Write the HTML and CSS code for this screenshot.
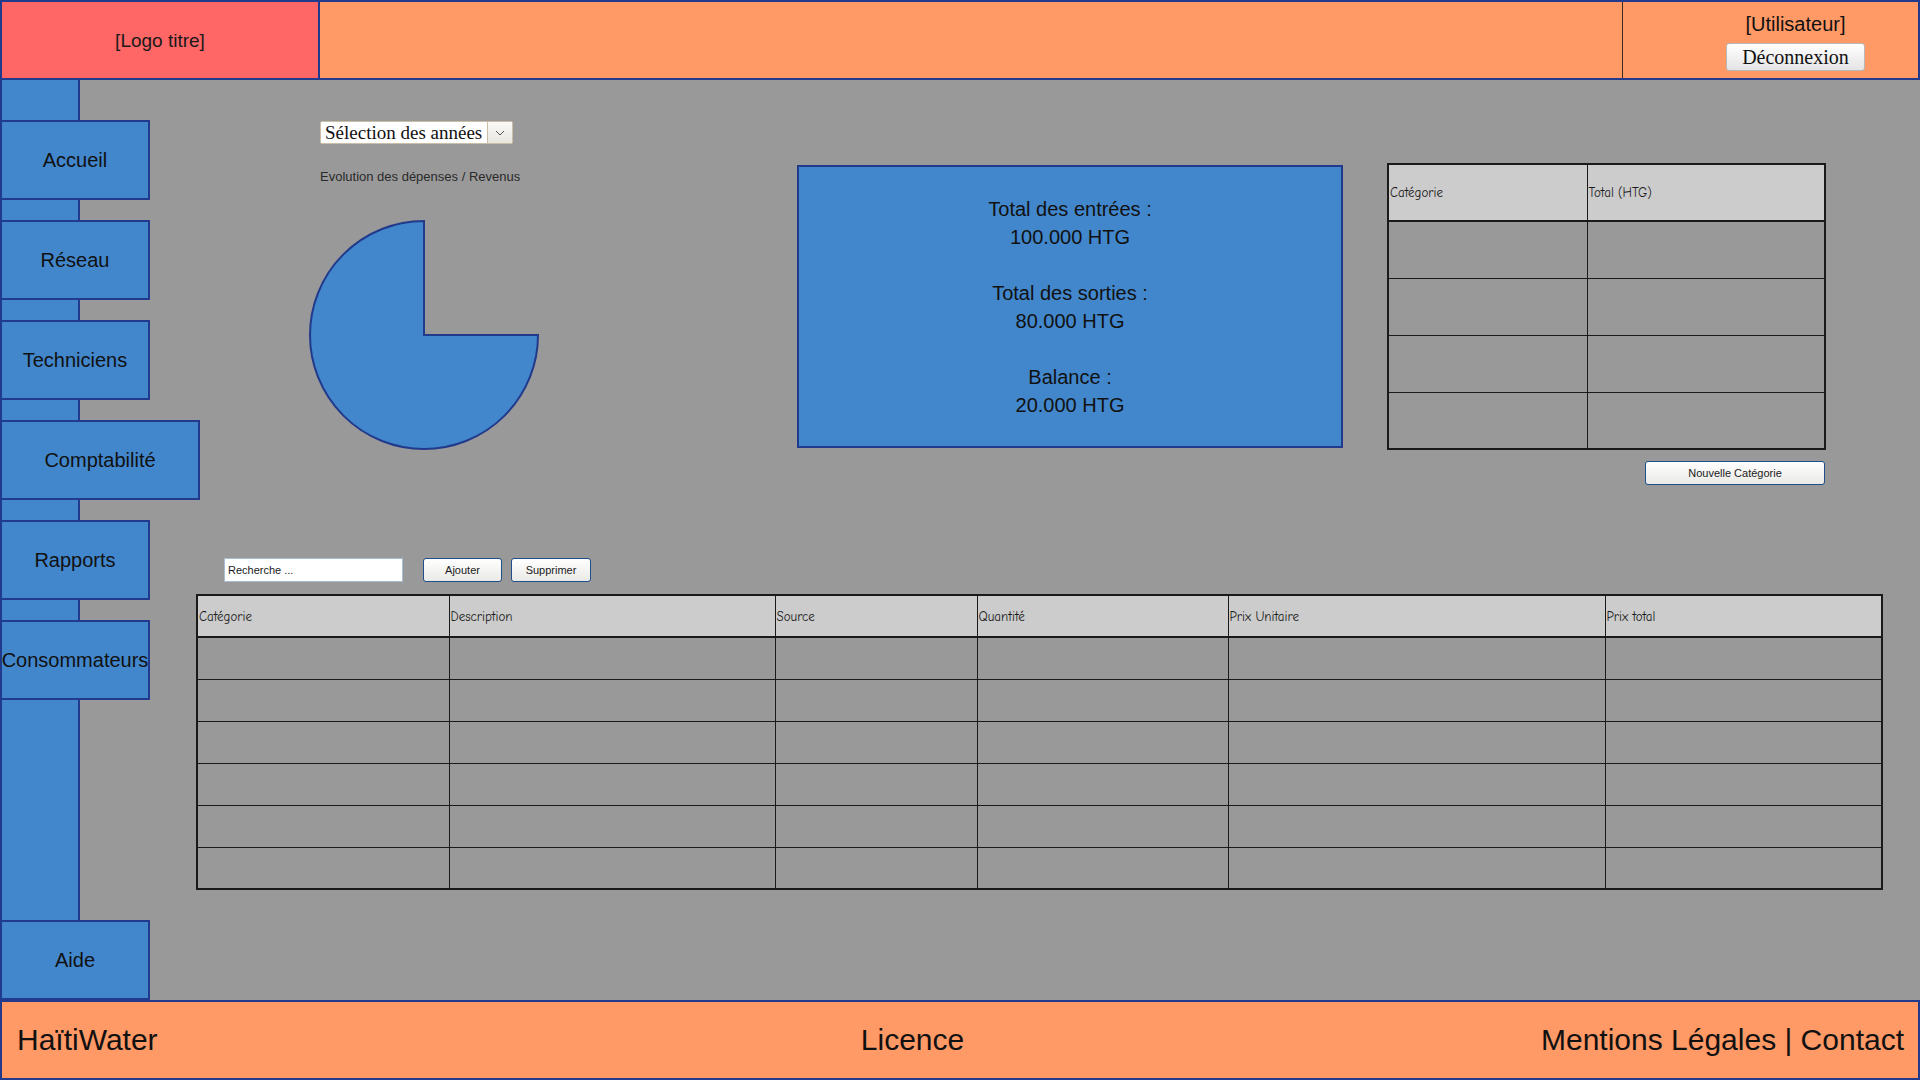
FILE: index.html
```html
<!DOCTYPE html>
<html lang="fr">
<head>
<meta charset="utf-8">
<title>HaïtiWater - Comptabilité</title>
<link rel="stylesheet" href="styles.css">
</head>
<body>
<div class="app">
  <header class="topbar">
    <div class="logo">[Logo titre]</div>
    <div class="topbar-fill"></div>
    <div class="user">
      <div class="user-name">[Utilisateur]</div>
      <button class="btn-logout">Déconnexion</button>
    </div>
  </header>

  <div class="middle">
    <nav class="sidebar">
      <div class="nav-btn">Accueil</div>
      <div class="nav-btn">Réseau</div>
      <div class="nav-btn">Techniciens</div>
      <div class="nav-btn nav-btn-active">Comptabilité</div>
      <div class="nav-btn">Rapports</div>
      <div class="nav-btn">Consommateurs</div>
      <div class="nav-btn nav-btn-bottom">Aide</div>
    </nav>

    <main class="content">
      <section class="top-row">
        <div class="chart-col">
          <div class="year-select">
            <span class="year-select-text">Sélection des années</span>
            <span class="year-select-arrow">
              <svg width="10" height="6" viewBox="0 0 10 6"><path d="M1 1 L5 5 L9 1" fill="none" stroke="#555" stroke-width="1"/></svg>
            </span>
          </div>
          <div class="chart-label">Evolution des dépenses / Revenus</div>
          <svg class="pie" width="234" height="234" viewBox="0 0 234 234">
            <path d="M117 117 L117 3 A114 114 0 1 0 231 117 Z" fill="#4287cc" stroke="#213a8c" stroke-width="2" stroke-linejoin="miter"/>
          </svg>
        </div>

        <div class="summary">
          <div class="summary-group">
            <p>Total des entrées :</p>
            <p>100.000 HTG</p>
          </div>
          <div class="summary-group">
            <p>Total des sorties :</p>
            <p>80.000 HTG</p>
          </div>
          <div class="summary-group">
            <p>Balance :</p>
            <p>20.000 HTG</p>
          </div>
        </div>

        <div class="cat-col">
          <table class="grid-table cat-table">
            <colgroup><col class="cat-c1"><col class="cat-c2"></colgroup>
            <thead><tr><th>Catégorie</th><th>Total (HTG)</th></tr></thead>
            <tbody>
              <tr><td></td><td></td></tr>
              <tr><td></td><td></td></tr>
              <tr><td></td><td></td></tr>
              <tr><td></td><td></td></tr>
            </tbody>
          </table>
          <div class="cat-actions"><button class="btn-small btn-newcat">Nouvelle Catégorie</button></div>
        </div>
      </section>

      <section class="toolbar">
        <input class="search" type="text" value="Recherche ...">
        <button class="btn-small btn-add">Ajouter</button>
        <button class="btn-small btn-del">Supprimer</button>
      </section>

      <table class="grid-table main-table">
        <colgroup>
          <col class="m-c1"><col class="m-c2"><col class="m-c3"><col class="m-c4"><col class="m-c5"><col class="m-c6">
        </colgroup>
        <thead>
          <tr><th>Catégorie</th><th>Description</th><th>Source</th><th>Quantité</th><th>Prix Unitaire</th><th>Prix total</th></tr>
        </thead>
        <tbody>
          <tr><td></td><td></td><td></td><td></td><td></td><td></td></tr>
          <tr><td></td><td></td><td></td><td></td><td></td><td></td></tr>
          <tr><td></td><td></td><td></td><td></td><td></td><td></td></tr>
          <tr><td></td><td></td><td></td><td></td><td></td><td></td></tr>
          <tr><td></td><td></td><td></td><td></td><td></td><td></td></tr>
          <tr><td></td><td></td><td></td><td></td><td></td><td></td></tr>
        </tbody>
      </table>
    </main>
  </div>

  <footer class="footer">
    <div class="footer-left">HaïtiWater</div>
    <div class="footer-center">Licence</div>
    <div class="footer-right">Mentions Légales | Contact</div>
  </footer>
</div>
</body>
</html>
```

FILE: styles.css
```css
* { box-sizing: border-box; }

html, body {
  margin: 0;
  padding: 0;
}

body {
  width: 1920px;
  height: 1080px;
  overflow: hidden;
  font-family: "Liberation Sans", Arial, sans-serif;
  color: #111;
  background: #999999;
}

.app {
  display: flex;
  flex-direction: column;
  width: 1920px;
  height: 1080px;
}

/* ---------- Header ---------- */
.topbar {
  display: flex;
  height: 80px;
  flex: none;
  background: #ff9966;
  border: 2px solid #213a8c;
}

.logo {
  width: 318px;
  background: #ff6666;
  border-right: 2px solid #213a8c;
  display: flex;
  align-items: center;
  justify-content: center;
  font-size: 19px;
  color: #1a1a1a;
  padding-top: 2px;
}

.topbar-fill { flex: 1; }

.user {
  width: 296px;
  border-left: 1px solid #3a2a20;
  padding-left: 50px;
  padding-top: 11px;
  display: flex;
  flex-direction: column;
  align-items: center;
}

.user-name {
  font-size: 20px;
  line-height: 23px;
  color: #111;
}

.btn-logout {
  margin-top: 7px;
  width: 139px;
  height: 28px;
  padding: 0;
  font-family: "Liberation Serif", "Times New Roman", serif;
  font-size: 20px;
  color: #111;
  background: linear-gradient(#ffffff, #e4e4e4);
  border: 1px solid #b8b8b8;
  border-radius: 3px;
}

/* ---------- Middle ---------- */
.middle {
  flex: 1;
  display: flex;
  min-height: 0;
}

.sidebar {
  position: relative;
  z-index: 1;
  width: 80px;
  flex: none;
  background: #4287cc;
  border-left: 2px solid #213a8c;
  border-right: 2px solid #213a8c;
  padding-top: 40px;
  display: flex;
  flex-direction: column;
  gap: 20px;
}

.nav-btn {
  margin-left: -2px;
  width: 150px;
  height: 80px;
  flex: none;
  background: #4287cc;
  border: 2px solid #213a8c;
  display: flex;
  align-items: center;
  justify-content: center;
  font-size: 20px;
  color: #111;
  white-space: nowrap;
}

.nav-btn-active { width: 200px; }

.nav-btn-bottom { margin-top: auto; }

/* ---------- Content ---------- */
.content {
  flex: 1;
  padding-top: 41px;
  padding-left: 116px;
}

.top-row {
  display: flex;
  align-items: flex-start;
  margin-left: 111px;
}

.chart-col {
  width: 234px;
  display: flex;
  flex-direction: column;
}

.year-select {
  margin-left: 13px;
  width: 193px;
  height: 23px;
  display: flex;
  background: #ffffff;
  border: 1px solid #c9bfa9;
  border-radius: 2px;
}

.year-select-text {
  flex: 1;
  padding-left: 4px;
  font-family: "Liberation Serif", "Times New Roman", serif;
  font-size: 19px;
  line-height: 21px;
  color: #111;
  white-space: nowrap;
}

.year-select-arrow {
  width: 25px;
  border-left: 1px solid #c9bfa9;
  background: linear-gradient(#fbfaf8, #e9e6df);
  display: flex;
  align-items: center;
  justify-content: center;
}

.chart-label {
  margin-top: 25px;
  margin-left: 13px;
  font-size: 13px;
  line-height: 16px;
  color: #2a2a2a;
  white-space: nowrap;
}

.pie {
  display: block;
  margin-top: 33px;
}

.summary {
  margin-left: 256px;
  margin-top: 44px;
  width: 546px;
  height: 283px;
  background: #4287cc;
  border: 2px solid #213a8c;
  display: flex;
  flex-direction: column;
  align-items: center;
  justify-content: center;
  gap: 28px;
  font-size: 20px;
  color: #111;
  text-align: center;
}

.summary p {
  margin: 0;
  line-height: 28px;
}

.cat-col {
  margin-left: 44px;
  margin-top: 42px;
  width: 438px;
}

.grid-table {
  border-collapse: collapse;
  table-layout: fixed;
  border: 2px solid #1a1a1a;
}

.grid-table th {
  background: #cccccc;
  font-family: "Comic Sans MS", "Comic Neue", "DejaVu Sans", sans-serif;
  font-weight: normal;
  font-size: 13px;
  color: #1a1a1a;
  text-align: left;
  padding: 0 0 0 1px;
  border: 1px solid #1a1a1a;
  border-bottom-width: 2px;
  white-space: nowrap;
  overflow: hidden;
}

.grid-table td {
  padding: 0;
  border: 1px solid #1a1a1a;
}

.cat-table { width: 437px; }
.cat-c1 { width: 199px; }
.cat-c2 { width: 238px; }
.cat-table th { height: 57px; }
.cat-table td { height: 57px; }

.cat-actions {
  display: flex;
  justify-content: flex-end;
  margin-top: 11px;
}

.btn-small {
  height: 24px;
  padding: 0;
  font-family: "Liberation Sans", Arial, sans-serif;
  font-size: 11px;
  color: #1a1a1a;
  background: linear-gradient(#ffffff, #e9e9e6);
  border: 1px solid #1e4f8c;
  border-radius: 3px;
}

.btn-newcat { width: 180px; }

.toolbar {
  display: flex;
  align-items: center;
  margin-top: 73px;
  margin-left: 28px;
}

.search {
  width: 179px;
  height: 24px;
  padding: 0 0 0 3px;
  border: 1px solid #a9bdd3;
  background: #ffffff;
  font-family: "Liberation Sans", Arial, sans-serif;
  font-size: 11px;
  color: #1a1a1a;
  outline: none;
}

.btn-add { width: 79px; margin-left: 20px; }
.btn-del { width: 80px; margin-left: 9px; }

.main-table {
  margin-top: 12px;
  width: 1685px;
}

.m-c1 { width: 252px; }
.m-c2 { width: 326px; }
.m-c3 { width: 202px; }
.m-c4 { width: 251px; }
.m-c5 { width: 377px; }
.m-c6 { width: 277px; }

.main-table th { height: 42px; }
.main-table td { height: 42px; }

/* ---------- Footer ---------- */
.footer {
  height: 80px;
  flex: none;
  background: #ff9966;
  border: 2px solid #213a8c;
  display: flex;
  align-items: center;
  padding: 0 14px 0 15px;
  font-size: 30px;
  color: #111;
}

.footer-left { flex: 1; white-space: nowrap; }
.footer-center { margin-right: 96px; white-space: nowrap; }
.footer-right { flex: 1; text-align: right; white-space: nowrap; }
```
